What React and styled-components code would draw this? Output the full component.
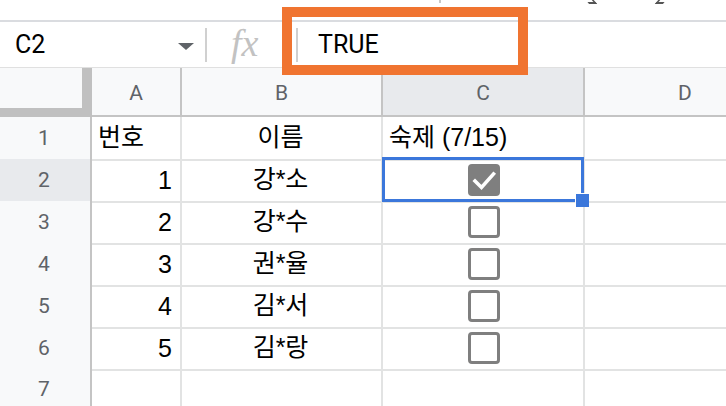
import React from 'react'
import styled, { createGlobalStyle } from 'styled-components'

const GlobalStyle = createGlobalStyle`
	html, body {
		margin: 0;
		padding: 0;
		background: #ffffff;
		overflow: hidden;
	}
	body {
		font-family: "Liberation Sans", Arial, "Noto Sans CJK KR", sans-serif;
	}
`

const rows = [
	{ no: '번호', name: '이름', hw: '숙제 (7/15)', header: true },
	{ no: 1, name: '강*소', checked: true },
	{ no: 2, name: '강*수' },
	{ no: 3, name: '권*율' },
	{ no: 4, name: '김*서' },
	{ no: 5, name: '김*랑' },
	{ empty: true },
]

const columns = ['A', 'B', 'C', 'D']

export default function App() {
	return (
		<Page>
			<GlobalStyle />
			<Toolbar>
				<ToolbarDivider />
				<IconTip style={{ marginLeft: 146 }} />
				<IconTip style={{ marginLeft: 62 }} flip />
			</Toolbar>

			<FormulaBar>
				<NameBox>
					<span>C2</span>
					<Caret />
				</NameBox>
				<BarDivider />
				<Fx>fx</Fx>
				<FormulaInput>
					<InputDivider />
					<FormulaText>TRUE</FormulaText>
				</FormulaInput>
			</FormulaBar>

			<Highlight />

			<HeaderRow>
				<Corner />
				{columns.map(col => (
					<ColHeader key={col} active={col === 'C'}>{col}</ColHeader>
				))}
			</HeaderRow>

			{rows.map((row, i) => (
				<Row key={i}>
					<RowHeader active={i === 1}>{i + 1}</RowHeader>
					<Cell align={row.header ? 'left' : 'right'}>{row.no}</Cell>
					<Cell align="center">{row.name}</Cell>
					<Cell align={row.header ? 'left' : 'box'}>
						{row.header && row.hw}
						{!row.header && !row.empty && <Checkbox checked={row.checked} />}
						{i === 1 && (
							<Selection>
								<FillHandle />
							</Selection>
						)}
					</Cell>
					<Cell />
				</Row>
			))}
		</Page>
	)
}

const Checkbox = ({ checked }) => (
	<Box checked={checked}>
		{checked && (
			<svg width="32" height="32" viewBox="0 0 32 32">
				<path d="M7 17 L13.5 23.5 L25.5 10" fill="none" stroke="#ffffff" strokeWidth="3.6" strokeLinecap="square" />
			</svg>
		)}
	</Box>
)

const Page = styled.div`
	position: relative;
	width: 726px;
	height: 406px;
	overflow: hidden;
	background: #ffffff;
`

const Toolbar = styled.div`
	display: flex;
	align-items: flex-start;
	height: 20px;
	padding-left: 439px;
	border-bottom: 2px solid #dadce0;
`

const ToolbarDivider = styled.div`
	width: 2px;
	height: 3px;
	background: #c8c8c8;
`

const IconTip = styled.div`
	width: 6px;
	height: 3px;
	border-bottom: 2px solid #555;
	border-${p => (p.flip ? 'left' : 'right')}: 2px solid #555;
	transform: skewX(${p => (p.flip ? '-40deg' : '40deg')});
	margin-top: -1px;
`

const FormulaBar = styled.div`
	display: flex;
	align-items: center;
	height: 46px;
	box-sizing: border-box;
	border-bottom: 1px solid #e0e0e0;
`

const NameBox = styled.div`
	display: flex;
	align-items: center;
	justify-content: space-between;
	width: 205px;
	box-sizing: border-box;
	padding: 0 11px 0 15px;
	font-family: Roboto, "Liberation Sans", sans-serif;
	font-size: 25px;
	color: #000;
`

const Caret = styled.div`
	width: 0;
	height: 0;
	border-left: 8px solid transparent;
	border-right: 8px solid transparent;
	border-top: 7px solid #5f6368;
	margin-top: 4px;
`

const BarDivider = styled.div`
	width: 2px;
	height: 34px;
	background: #d0d0d0;
`

const Fx = styled.div`
	width: 75px;
	box-sizing: border-box;
	padding-left: 24px;
	font-family: "Liberation Serif", "Times New Roman", serif;
	font-style: italic;
	font-size: 38px;
	line-height: 1;
	color: #c2c2c2;
	margin-top: -4px;
`

const FormulaInput = styled.div`
	display: flex;
	align-items: center;
	flex: 1;
	padding-left: 14px;
	gap: 20px;
`

const InputDivider = styled.div`
	width: 2px;
	height: 34px;
	background: #cfcfcf;
`

const FormulaText = styled.div`
	font-family: Roboto, "Liberation Sans", sans-serif;
	font-size: 25px;
	color: #000;
`

const Highlight = styled.div`
	position: absolute;
	left: 282px;
	top: 7px;
	width: 246px;
	height: 68px;
	box-sizing: border-box;
	border: 10px solid #f07430;
	pointer-events: none;
	z-index: 3;
`

const grid = `
	display: grid;
	grid-template-columns: 92px 90px 201px 202px 202px;
`

const HeaderRow = styled.div`
	${grid}
	height: 49px;
	box-sizing: border-box;
	border-bottom: 2px solid #c4c4c4;
	background: #f8f9fa;
`

const Corner = styled.div`
	background: #f8f9fa;
	border-right: 10px solid #c0c0c0;
	border-bottom: 9px solid #c0c0c0;
	margin-bottom: -2px;
`

const ColHeader = styled.div`
	display: flex;
	align-items: center;
	justify-content: center;
	border-right: 2px solid #c4c4c4;
	background: ${p => (p.active ? '#e8eaed' : '#f8f9fa')};
	font-family: Roboto, "Liberation Sans", sans-serif;
	font-size: 21px;
	color: #5f6368;
	padding-top: 2px;
`

const Row = styled.div`
	${grid}
	height: 42px;
`

const RowHeader = styled.div`
	display: flex;
	align-items: center;
	justify-content: center;
	box-sizing: border-box;
	border-right: 2px solid #c4c4c4;
	border-bottom: 2px solid #c4c4c4;
	background: ${p => (p.active ? '#e8eaed' : '#f8f9fa')};
	font-family: Roboto, "Liberation Sans", sans-serif;
	font-size: 21px;
	color: #5f6368;
	padding-right: 2px;
`

const justify = { left: 'flex-start', right: 'flex-end', center: 'center', box: 'center' }

const Cell = styled.div`
	position: relative;
	display: flex;
	align-items: ${p => (p.align === 'box' ? 'center' : 'flex-end')};
	justify-content: ${p => justify[p.align] || 'flex-start'};
	box-sizing: border-box;
	border-right: 2px solid #e2e3e3;
	border-bottom: 2px solid #e2e3e3;
	padding: ${p => (p.align === 'box' ? '0 0 0 2px' : '0 8px 6px 6px')};
	font-size: 25px;
	color: #000;
	white-space: nowrap;
`

const Box = styled.div`
	width: 32px;
	height: 32px;
	box-sizing: border-box;
	border-radius: 4px;
	border: ${p => (p.checked ? 'none' : '3px solid #7f7f7f')};
	background: ${p => (p.checked ? '#7f7f7f' : 'transparent')};
	display: flex;
`

const Selection = styled.div`
	position: absolute;
	left: -1px;
	top: -2px;
	right: -1px;
	bottom: -1px;
	border: 3px solid #3b77db;
	pointer-events: none;
	z-index: 2;
`

const FillHandle = styled.div`
	position: absolute;
	right: -8px;
	bottom: -8px;
	width: 14px;
	height: 14px;
	box-sizing: border-box;
	background: #3b77db;
	border-top: 1px solid #fff;
	border-left: 1px solid #fff;
`
